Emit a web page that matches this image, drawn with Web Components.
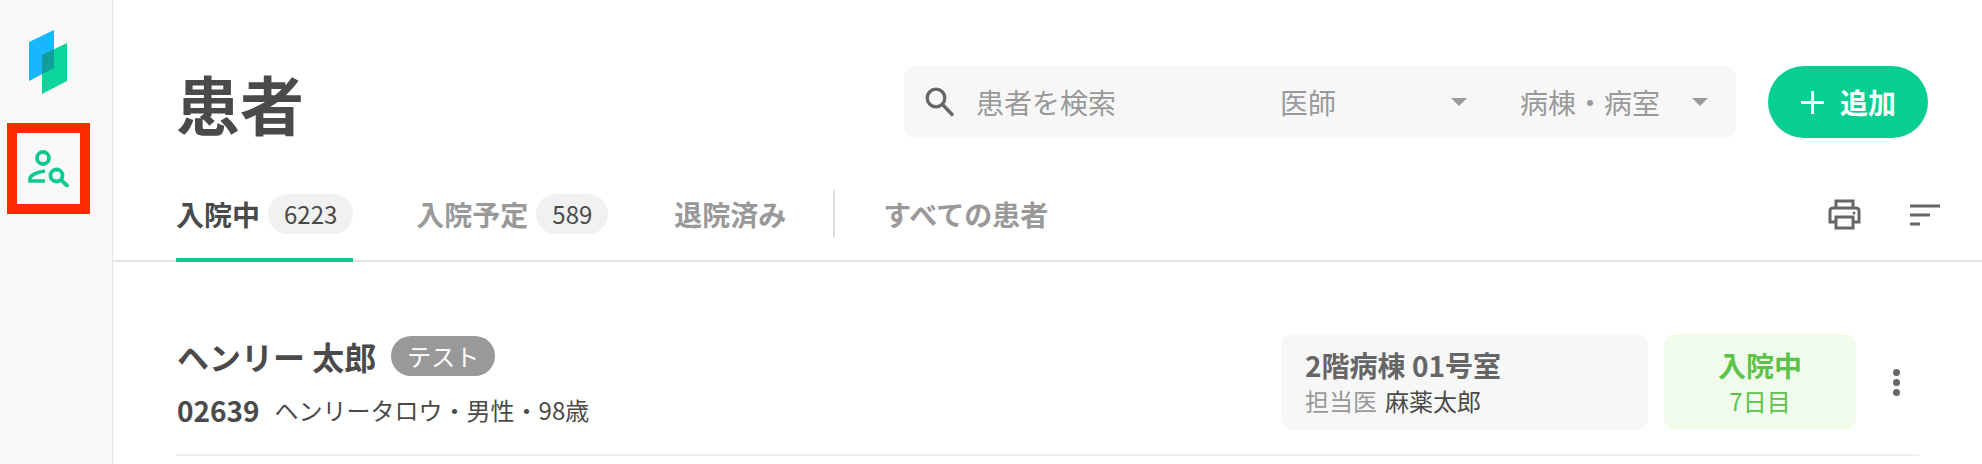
<!DOCTYPE html>
<html lang="ja"><head><meta charset="utf-8"><title>患者</title>
<style>
html,body{margin:0;padding:0;background:#fff;width:1982px;height:464px;overflow:hidden}
body{font-family:"Noto Sans CJK JP","Noto Sans",sans-serif;color:#4a4a4a;display:flex}
</style></head><body>
<app-sidebar></app-sidebar>
<patient-page></patient-page>
<script>
function def(name,css,html){
  customElements.define(name,class extends HTMLElement{
    constructor(){super();this.attachShadow({mode:'open'}).innerHTML='<style>'+css+'</style>'+html;}
  });
}
def('app-sidebar',`
:host{display:block;box-sizing:border-box;width:113px;height:464px;background:#f9f9f9;border-right:1px solid #e6e6e6;flex:none;padding:30px 0 0 7px}
svg{display:block}
.logo{margin-left:21px}
.nav{box-sizing:border-box;width:83px;height:91px;border:10px solid #ff2a00;margin-top:29px;display:flex;align-items:center;justify-content:center}
`,`<svg class="logo" width="40" height="64" viewBox="0 0 40 64">
<path d="M1 12 26 0V38L1 51Z" fill="#19b6fd"/>
<path d="M14 25 39 13V51L14 64Z" fill="#0ad59b"/>
<path d="M14 25 26 19V38L14 44Z" fill="#0f9e9c"/></svg>
<div class="nav"><svg width="63" height="71" viewBox="17 133 63 71" fill="none" stroke="#0cc98f" stroke-width="3.800">
<circle cx="43" cy="158" r="6"/>
<path d="M45 171C37 172 30 175 30 179V181H45" stroke-width="3.600"/>
<circle cx="56.500" cy="175.500" r="6"/>
<path d="M61 180 67 185.500" stroke-linecap="round"/></svg></div>`);

def('search-bar',`
:host{display:flex;align-items:center;box-sizing:border-box;width:832px;height:72px;background:#f7f7f7;border-radius:11px;color:#999;font-size:28px;line-height:40px;white-space:nowrap}
svg{display:block;flex:none}
.q{margin:1px 0 0 21px}
.ph{margin-left:20px;width:304px;flex:none}
.caret{width:0;height:0;border:8px solid transparent;border-top:8px solid #999;border-bottom:0;margin-top:0;flex:none}
.f{display:flex;align-items:center;flex:none}
`,`<svg class="q" width="31" height="31" viewBox="0 0 31 31" fill="none" stroke="#666" stroke-width="3.300"><circle cx="11" cy="11" r="8.800"/><path d="M17.500 17.500 28 28.500"/></svg>
<span class="ph">患者を検索</span>
<span class="f"><span>医師</span><span class="caret" style="margin-left:115px"></span></span>
<span class="f" style="margin-left:53px"><span>病棟・病室</span><span class="caret" style="margin-left:32px"></span></span>`);

def('add-button',`
:host{display:flex;align-items:center;box-sizing:border-box;width:160px;height:72px;border-radius:36px;background:#09ce92;color:#fff;font-size:28px;font-weight:700;padding-left:33px;margin-left:32px}
svg{display:block;margin-right:16px}
`,`<svg width="23" height="23" viewBox="0 0 23 23" stroke="#fff" stroke-width="3"><path d="M11.500 0V23M0 11.500H23"/></svg><span>追加</span>`);

def('page-tab',`
:host{display:flex;box-sizing:border-box;height:68px;align-items:flex-start;font-size:28px;font-weight:700;color:#999;border-bottom:4px solid transparent;line-height:40px;flex:none}
:host([active]){color:#4a4a4a;border-bottom-color:#0cc98f}
.c{font-weight:400;font-size:24px;color:#4a4a4a;background:#f1f1f1;border-radius:20px;height:40px;line-height:40px;padding:0 16px;margin-left:8px}
.c:empty{display:none}
`,`<span class="t"><slot></slot></span><span class="c"></span>`);

def('patient-row',`
:host{display:flex;align-items:center;box-sizing:border-box;width:1743px;height:122px;padding-bottom:24px;border-bottom:2px solid #f0f0f0;margin:72px 0 0 63px}
.l{flex:1;padding-left:1px}
.n{display:flex;align-items:center;height:40px;font-size:32px;font-weight:700;color:#4a4a4a;margin-top:-1px}
.b{font-size:24px;font-weight:400;color:#fff;background:#999;border-radius:20px;height:40px;line-height:40px;padding:0 16px;margin-left:15px}
.s{display:flex;align-items:center;height:36px;font-size:24px;margin-top:16px;color:#4a4a4a}
.id{font-size:28px;font-weight:700;margin-right:15px}
.room{box-sizing:border-box;width:367px;height:96px;border-radius:12px;background:#f7f7f7;padding:12px 0 0 24px}
.r1{font-size:28px;font-weight:700;color:#666;line-height:38px}
.r2{font-size:24px;line-height:34px;color:#4a4a4a}
.r2 span{color:#999;margin-right:8px}
.st{box-sizing:border-box;width:192px;height:96px;border-radius:12px;background:#f1fbec;margin-left:16px;color:#5cc24a;text-align:center;padding-top:12px}
.dots{display:flex;flex-direction:column;gap:3px;width:63px;padding-left:37px;box-sizing:border-box}
.dots i{display:block;width:7px;height:7px;border-radius:50%;background:#666}
`,`<div class="l"><div class="n"><span>ヘンリー 太郎</span><span class="b">テスト</span></div>
<div class="s"><span class="id">02639</span><span>ヘンリータロウ・男性・98歳</span></div></div>
<div class="room"><div class="r1">2階病棟 01号室</div><div class="r2"><span>担当医</span>麻薬太郎</div></div>
<div class="st"><div class="r1" style="color:inherit">入院中</div><div class="r2" style="color:inherit">7日目</div></div>
<div class="dots"><i></i><i></i><i></i></div>`);

def('patient-page',`
:host{display:block;flex:1;min-width:0}
.top{display:flex;align-items:center;height:72px;margin-top:66px;padding:0 54px 0 63px}
h1{margin:0;font-size:64px;font-weight:700;color:#4a4a4a;line-height:72px;flex:1}
.tabs{display:flex;align-items:flex-start;height:66px;margin-top:56px;padding-left:63px;border-bottom:2px solid #e2e2e2}
.div{width:2px;height:47px;background:#dcdcdc;margin:-4px 0 0 47px;flex:none}
.act{margin-left:auto;display:flex;align-items:center;gap:49px;padding:5px 42px 0 0}
svg{display:block}
`,`<div class="top"><h1>患者</h1><search-bar></search-bar><add-button></add-button></div>
<div class="tabs">
<page-tab active data-c="6223">入院中</page-tab>
<page-tab style="margin-left:63px" data-c="589">入院予定</page-tab>
<page-tab style="margin-left:66px">退院済み</page-tab>
<span class="div"></span>
<page-tab style="margin-left:48px">すべての患者</page-tab>
<span class="act">
<svg width="33" height="31" viewBox="0 0 33 31" fill="none" stroke="#666" stroke-width="3"><path d="M8 9V2H25V9M8 23H2V12Q2 9 5 9H28Q31 9 31 12V23H25"/><path d="M8 18H25V29H8Z"/><circle cx="26" cy="14" r="1.500" fill="#666" stroke="none"/></svg>
<svg width="30" height="24" viewBox="0 0 30 24" stroke="#666" stroke-width="3"><path d="M0 3H30M0 12H20M0 21H10"/></svg>
</span></div>
<patient-row></patient-row>`);
document.querySelector('patient-page').shadowRoot.querySelectorAll('page-tab').forEach(t=>{
  t.shadowRoot.querySelector('.c').textContent=t.dataset.c||'';
});
</script>
</body></html>
